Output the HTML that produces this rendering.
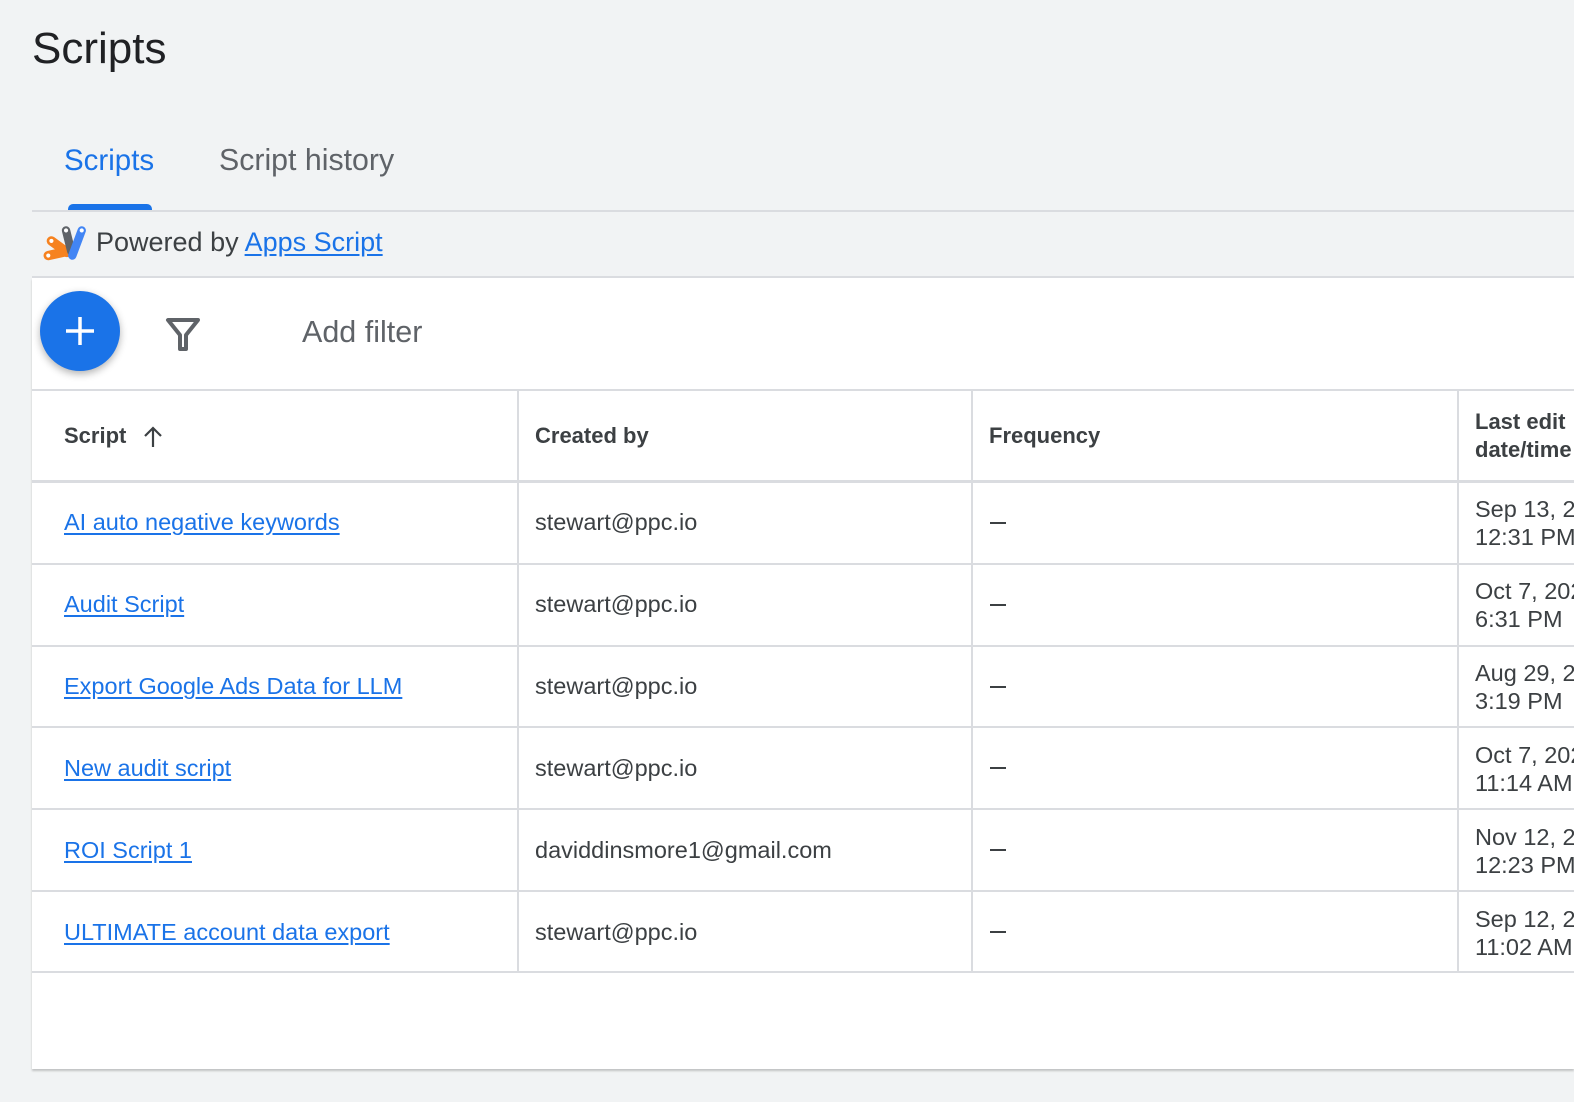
<!DOCTYPE html>
<html><head><meta charset="utf-8"><style>
*{margin:0;padding:0;box-sizing:border-box}
body{width:1574px;height:1102px;background:#f1f3f4;font-family:"Liberation Sans",sans-serif;position:relative;overflow:hidden;color:#3c4043}
.a{position:absolute;white-space:nowrap}
.lnk{color:#1a73e8;text-decoration:underline;text-underline-offset:3px;font-size:23.5px}
.cell{font-size:23.5px;color:#3c4043}
.hd{font-size:22px;font-weight:bold;color:#3c4043}
.vl{position:absolute;width:2px;background:#dadce0;top:390px;height:582px}
.hl{position:absolute;left:32px;right:0;height:2px;background:#dadce0}
.dash{position:absolute;left:990px;width:16px;height:2px;background:#3c4043}
</style></head><body>
<div class="a" style="left:32px;top:24px;font-size:44px;color:#202124">Scripts</div>
<div class="a" style="left:64px;top:144px;font-size:29.5px;color:#1a73e8">Scripts</div>
<div class="a" style="left:219px;top:144px;font-size:30.3px;color:#5f6368">Script history</div>
<div class="a" style="left:68px;top:204px;width:84px;height:7px;background:#1a73e8;border-radius:5px 5px 0 0"></div>
<div class="hl" style="top:210px"></div>
<svg class="a" style="left:42px;top:224px" width="46" height="38" viewBox="0 0 44 36">
<g stroke-linecap="round">
<line x1="6" y1="30" x2="24" y2="26" stroke="#f6821f" stroke-width="9"/>
<line x1="9" y1="16" x2="24" y2="27" stroke="#f6821f" stroke-width="9"/>
<line x1="23" y1="6" x2="28" y2="26" stroke="#5f6368" stroke-width="8"/>
<line x1="38" y1="6" x2="29" y2="30" stroke="#4285f4" stroke-width="8"/>
</g>
<circle cx="6" cy="30" r="2" fill="#fff"/><circle cx="9" cy="16" r="2" fill="#fff"/><circle cx="23" cy="6" r="2" fill="#fff"/><circle cx="38" cy="6" r="2" fill="#fff"/>
</svg>
<div class="a" style="left:96px;top:227px;font-size:27px;color:#3c4043">Powered by <span style="color:#1a73e8;text-decoration:underline;text-underline-offset:3px">Apps Script</span></div>
<div class="hl" style="top:276px"></div>
<div class="a" style="left:32px;top:278px;right:0;height:791px;background:#fff;box-shadow:0 2px 2px rgba(0,0,0,.2)"></div>
<div class="a" style="left:40px;top:291px;width:80px;height:80px;border-radius:50%;background:#1a73e8;box-shadow:0 3px 8px rgba(0,0,0,.3)"></div>
<svg class="a" style="left:62px;top:313px" width="36" height="36"><path d="M18 4V32M4 18H32" stroke="#fff" stroke-width="3.5"/></svg>
<svg class="a" style="left:164px;top:316px" width="38" height="36" viewBox="0 0 38 36"><path d="M4 4H34L22 19V33H16V19Z" fill="none" stroke="#5f6368" stroke-width="4" stroke-linejoin="round"/></svg>
<div class="a" style="left:302px;top:315px;font-size:30.5px;color:#5f6368">Add filter</div>
<div class="hl" style="top:389px"></div>
<div class="hl" style="top:480px;height:3px"></div>
<div class="hl" style="top:563px"></div>
<div class="hl" style="top:645px"></div>
<div class="hl" style="top:726px"></div>
<div class="hl" style="top:808px"></div>
<div class="hl" style="top:890px"></div>
<div class="hl" style="top:971px"></div>
<div class="vl" style="left:517px"></div>
<div class="vl" style="left:971px"></div>
<div class="vl" style="left:1457px"></div>
<div class="a hd" style="left:64px;top:423px">Script</div>
<svg class="a" style="left:142px;top:425px" width="22" height="24"><path d="M11 3V22M3 11L11 3L19 11" fill="none" stroke="#3c4043" stroke-width="2.2"/></svg>
<div class="a hd" style="left:535px;top:423px">Created by</div>
<div class="a hd" style="left:989px;top:423px">Frequency</div>
<div class="a hd" style="left:1475px;top:408px;line-height:28px">Last edit<br>date/time</div>

<div class="a lnk" style="left:64px;top:509px">AI auto negative keywords</div>
<div class="a lnk" style="left:64px;top:591px">Audit Script</div>
<div class="a lnk" style="left:64px;top:673px">Export Google Ads Data for LLM</div>
<div class="a lnk" style="left:64px;top:755px">New audit script</div>
<div class="a lnk" style="left:64px;top:837px">ROI Script 1</div>
<div class="a lnk" style="left:64px;top:919px">ULTIMATE account data export</div>

<div class="a cell" style="left:535px;top:509px">stewart@ppc.io</div>
<div class="a cell" style="left:535px;top:591px">stewart@ppc.io</div>
<div class="a cell" style="left:535px;top:673px">stewart@ppc.io</div>
<div class="a cell" style="left:535px;top:755px">stewart@ppc.io</div>
<div class="a cell" style="left:535px;top:837px">daviddinsmore1@gmail.com</div>
<div class="a cell" style="left:535px;top:919px">stewart@ppc.io</div>

<div class="dash" style="top:522px"></div>
<div class="dash" style="top:604px"></div>
<div class="dash" style="top:686px"></div>
<div class="dash" style="top:767px"></div>
<div class="dash" style="top:849px"></div>
<div class="dash" style="top:931px"></div>

<div class="a cell" style="left:1475px;top:495px;line-height:28px">Sep 13, 2024<br>12:31 PM</div>
<div class="a cell" style="left:1475px;top:577px;line-height:28px">Oct 7, 2024<br>6:31 PM</div>
<div class="a cell" style="left:1475px;top:659px;line-height:28px">Aug 29, 2024<br>3:19 PM</div>
<div class="a cell" style="left:1475px;top:741px;line-height:28px">Oct 7, 2024<br>11:14 AM</div>
<div class="a cell" style="left:1475px;top:823px;line-height:28px">Nov 12, 2024<br>12:23 PM</div>
<div class="a cell" style="left:1475px;top:905px;line-height:28px">Sep 12, 2024<br>11:02 AM</div>
</body></html>
